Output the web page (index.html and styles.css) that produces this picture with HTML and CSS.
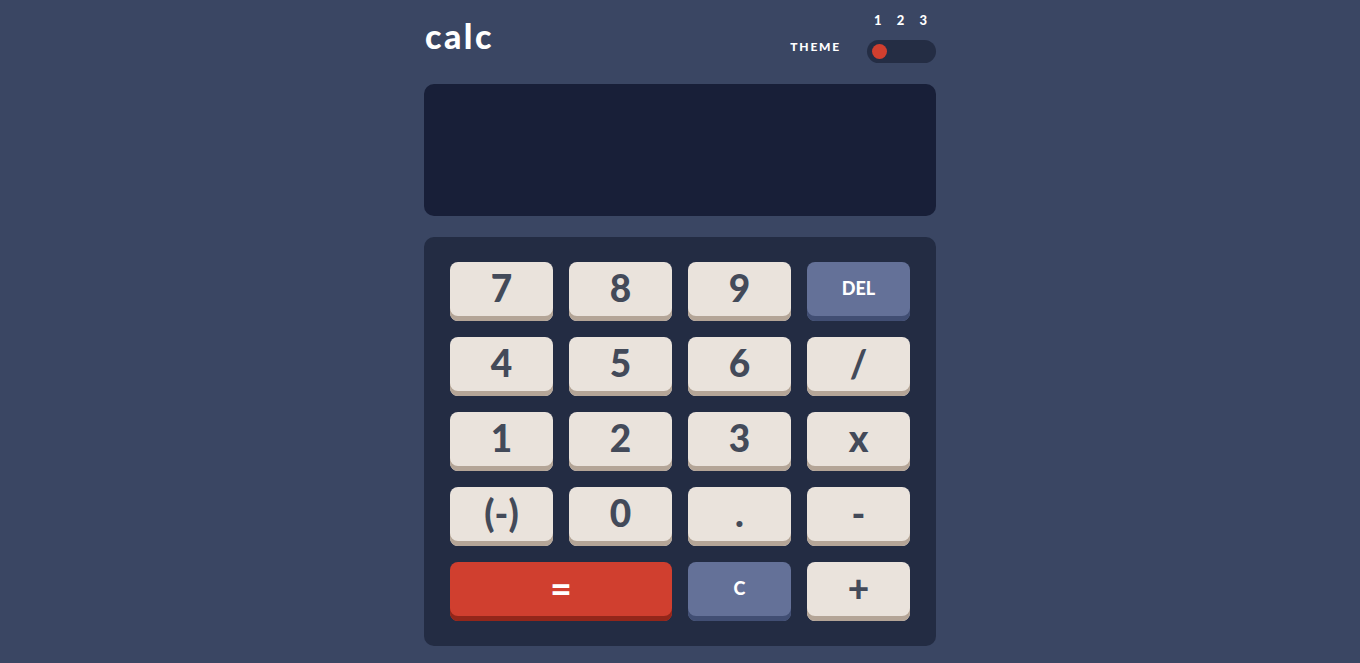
FILE: index.html
```html
<!DOCTYPE html>
<html lang="en">
<head>
<meta charset="utf-8">
<title>calc</title>
<link rel="stylesheet" href="styles.css">
</head>
<body>
<main class="app">
  <header class="header">
    <h1 class="logo">calc</h1>
    <div class="theme">
      <span class="theme-label">THEME</span>
      <div class="theme-switch">
        <div class="theme-nums"><span>1</span><span>2</span><span>3</span></div>
        <div class="toggle"><span class="knob"></span></div>
      </div>
    </div>
  </header>
  <section class="screen"></section>
  <section class="keypad">
    <button class="key">7</button>
    <button class="key">8</button>
    <button class="key">9</button>
    <button class="key key-blue key-word">DEL</button>
    <button class="key">4</button>
    <button class="key">5</button>
    <button class="key">6</button>
    <button class="key">/</button>
    <button class="key">1</button>
    <button class="key">2</button>
    <button class="key">3</button>
    <button class="key">x</button>
    <button class="key">(-)</button>
    <button class="key">0</button>
    <button class="key">.</button>
    <button class="key">-</button>
    <button class="key key-red key-wide">=</button>
    <button class="key key-blue key-word">C</button>
    <button class="key">+</button>
  </section>
</main>
</body>
</html>
```
FILE: styles.css
```css
* { box-sizing: border-box; }
html, body { margin: 0; padding: 0; }
body {
  background: #3a4663;
  font-family: "Lato", "Noto Sans", sans-serif;
  font-weight: 700;
  color: #ffffff;
  min-height: 663px;
}
.app {
  width: 512px;
  margin: 0 auto;
  padding-top: 12px;
}
.header {
  display: flex;
  justify-content: space-between;
  align-items: flex-end;
  height: 51px;
}
.logo {
  margin: 0 0 10px 1px;
  font-size: 34px;
  line-height: 1;
  font-weight: 900;
  letter-spacing: 2.5px;
}
.theme {
  display: flex;
  align-items: flex-end;
  gap: 26px;
}
.theme-label {
  font-size: 12px;
  font-weight: 900;
  letter-spacing: 1.8px;
  line-height: 1;
  margin-bottom: 10px;
}
.theme-switch {
  display: flex;
  flex-direction: column;
  gap: 13px;
  width: 69px;
}
.theme-nums {
  display: flex;
  justify-content: space-between;
  padding: 0 9px 0 7px;
  font-size: 13px;
  font-weight: 900;
  line-height: 14px;
}
.toggle {
  height: 23px;
  border-radius: 12px;
  background: #242d44;
  padding: 4px 5px;
  display: flex;
  align-items: center;
}
.knob {
  width: 15px;
  height: 15px;
  border-radius: 50%;
  background: #d03f2f;
}
.screen {
  margin-top: 21px;
  height: 132px;
  border-radius: 10px;
  background: #181f38;
}
.keypad {
  margin-top: 21px;
  background: #232c43;
  border-radius: 10px;
  padding: 25px 26px;
  display: grid;
  grid-template-columns: repeat(4, 1fr);
  column-gap: 16px;
  row-gap: 16px;
}
.key {
  height: 59px;
  border: 0;
  border-radius: 8px;
  background: #eae3dc;
  box-shadow: inset 0 -5px 0 #b4a597;
  color: #434a59;
  font-family: inherit;
  font-weight: 900;
  font-size: 37px;
  line-height: 1;
  padding: 0 0 8px;
  display: flex;
  align-items: center;
  justify-content: center;
  cursor: pointer;
}
.key-word {
  font-size: 18px;
  color: #ffffff;
  padding-bottom: 8px;
}
.key-blue {
  background: #647198;
  box-shadow: inset 0 -5px 0 #414e73;
}
.key-red {
  background: #d03f2f;
  box-shadow: inset 0 -5px 0 #93261a;
  color: #ffffff;
}
.key-wide {
  grid-column: span 2;
}
```
